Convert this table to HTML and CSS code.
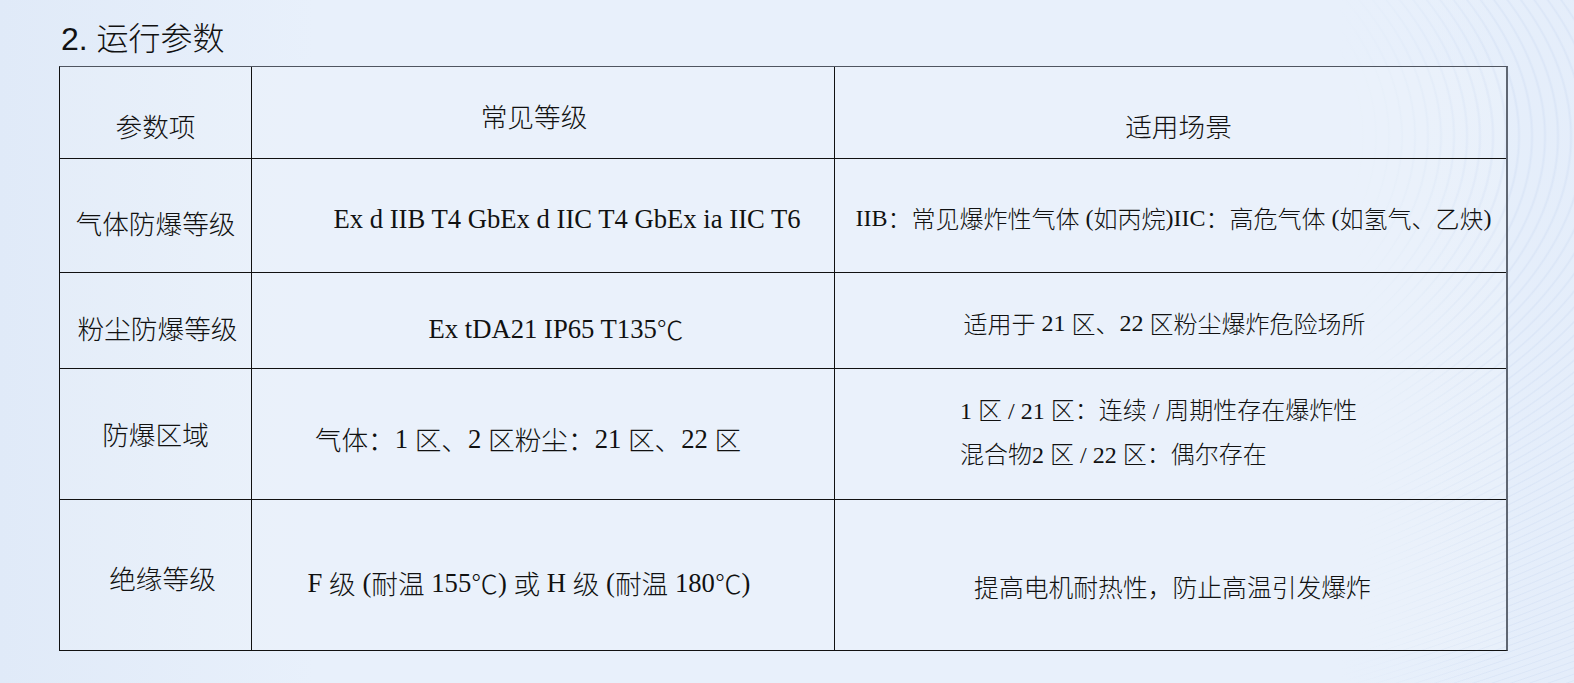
FILE: index.html
```html
<!DOCTYPE html>
<html lang="zh-CN">
<head>
<meta charset="utf-8">
<title>运行参数</title>
<link rel="stylesheet" href="styles.css">
</head>
<body>
<div class="slide">
  <h1 class="title">2. 运行参数</h1>
  <div class="grid">
    <div class="cell c1 h-c1">参数项</div>
    <div class="cell c2 h-c2">常见等级</div>
    <div class="cell c3 h-c3">适用场景</div>

    <div class="cell c1 r1-c1">气体防爆等级</div>
    <div class="cell c2 r1-c2"><span class="lat">Ex d IIB T4 GbEx d IIC T4 GbEx ia IIC T6</span></div>
    <div class="cell c3 r1-c3 small"><span class="lat">IIB</span>：常见爆炸性气体<span class="lat"> (</span>如丙烷<span class="lat">)IIC</span>：高危气体<span class="lat"> (</span>如氢气、乙炔<span class="lat">)</span></div>

    <div class="cell c1 r2-c1">粉尘防爆等级</div>
    <div class="cell c2 r2-c2"><span class="lat">Ex tDA21 IP65 T135</span>℃</div>
    <div class="cell c3 r2-c3 small">适用于<span class="lat"> 21 </span>区、<span class="lat">22 </span>区粉尘爆炸危险场所</div>

    <div class="cell c1 r3-c1">防爆区域</div>
    <div class="cell c2 r3-c2">气体：<span class="lat">1 </span>区、<span class="lat">2 </span>区粉尘：<span class="lat">21 </span>区、<span class="lat">22 </span>区</div>
    <div class="cell c3 r3-c3 small"><div class="lines"><div><span class="lat">1 </span>区<span class="lat"> / 21 </span>区：连续<span class="lat"> / </span>周期性存在爆炸性</div><div>混合物<span class="lat">2 </span>区<span class="lat"> / 22 </span>区：偶尔存在</div></div></div>

    <div class="cell c1 r4-c1 last">绝缘等级</div>
    <div class="cell c2 r4-c2 last"><span class="lat">F </span>级<span class="lat"> (</span>耐温<span class="lat"> 155</span>℃<span class="lat">) </span>或<span class="lat"> H </span>级<span class="lat"> (</span>耐温<span class="lat"> 180</span>℃<span class="lat">)</span></div>
    <div class="cell c3 r4-c3 last mid">提高电机耐热性，防止高温引发爆炸</div>
  </div>
</div>
</body>
</html>
```

FILE: styles.css
```css
* { box-sizing: border-box; }

html, body {
  margin: 0;
  padding: 0;
}

body {
  width: 1574px;
  height: 683px;
  overflow: hidden;
  font-family: "Noto Sans CJK SC", "Liberation Sans", sans-serif;
  color: #111;
  background:
    linear-gradient(118deg, rgba(255,255,255,0) 30%, rgba(255,255,255,0.35) 34%, rgba(255,255,255,0) 38%, rgba(255,255,255,0) 55%, rgba(255,255,255,0.3) 60%, rgba(255,255,255,0) 66%),
    repeating-radial-gradient(ellipse at 0% 20%, rgba(255,255,255,0) 0px, rgba(255,255,255,0) 9px, rgba(200,215,240,0.35) 11px, rgba(255,255,255,0) 13px),
    linear-gradient(95deg, #dfe9f7 0%, #e8f0fb 35%, #eaf2fc 70%, #e4edfa 100%);
}

.slide {
  width: 1574px;
  height: 683px;
  padding: 18px 0 0 59px;
  background: linear-gradient(90deg, rgba(224,234,248,1) 0%, rgba(232,240,251,1) 20%, rgba(232,240,251,1) 85%, rgba(232,240,251,0) 95%);
}

.title {
  margin: 0;
  padding-left: 2px;
  height: 48px;
  font-family: "Liberation Sans", "Noto Sans CJK SC", sans-serif;
  font-size: 32px;
  line-height: 42px;
  font-weight: 300;
  color: #111;
}

.grid {
  display: grid;
  grid-template-columns: 192px 583px 1fr;
  grid-template-rows: 92px 114px 96px 131px 150px;
  width: 1449px;
  border-top: 1px solid #4f5560;
  border-left: 1px solid #111;
  border-right: 2px solid #5f6672;
  border-bottom: 1px solid #111;
  background: rgba(255,255,255,0.12);
}

.cell {
  display: flex;
  align-items: center;
  justify-content: center;
  font-size: 26.67px;
  line-height: 32px;
  font-weight: 300;
  white-space: nowrap;
  border-bottom: 1px solid #111;
}

.lat {
  font-family: "Liberation Serif", serif;
  font-weight: 400;
  white-space: pre;
}

.cell.last { border-bottom: none; }

.c1, .c2 { border-right: 1px solid #111; }

.small { font-size: 24px; }
.mid { font-size: 24.8px; }

/* header */
.h-c1 { padding-top: 26px; }
.h-c2 { padding-right: 18px; padding-top: 6px; }
.h-c3 { padding-top: 26px; padding-left: 16px; }

/* row 1 */
.r1-c1 { padding-top: 14px; }
.r1-c2 { padding-top: 6px; padding-left: 48px; }
.r1-c3 { padding-top: 4px; padding-left: 6px; }

/* row 2 */
.r2-c1 { padding-top: 14px; padding-left: 4px; }
.r2-c2 { padding-top: 16px; padding-left: 26px; }
.r2-c3 { padding-top: 4px; padding-right: 12px; }

/* row 3 */
.r3-c1 { padding-top: 0; }
.r3-c2 { padding-top: 9px; padding-right: 30px; }
.r3-c3 { justify-content: flex-start; padding-left: 125px; padding-bottom: 4px; }

.lines { line-height: 42px; }

/* row 4 */
.r4-c1 { padding-top: 5px; padding-left: 14px; }
.r4-c2 { padding-top: 15px; padding-right: 28px; }
.r4-c3 { padding-top: 21px; padding-left: 4px; }
```
